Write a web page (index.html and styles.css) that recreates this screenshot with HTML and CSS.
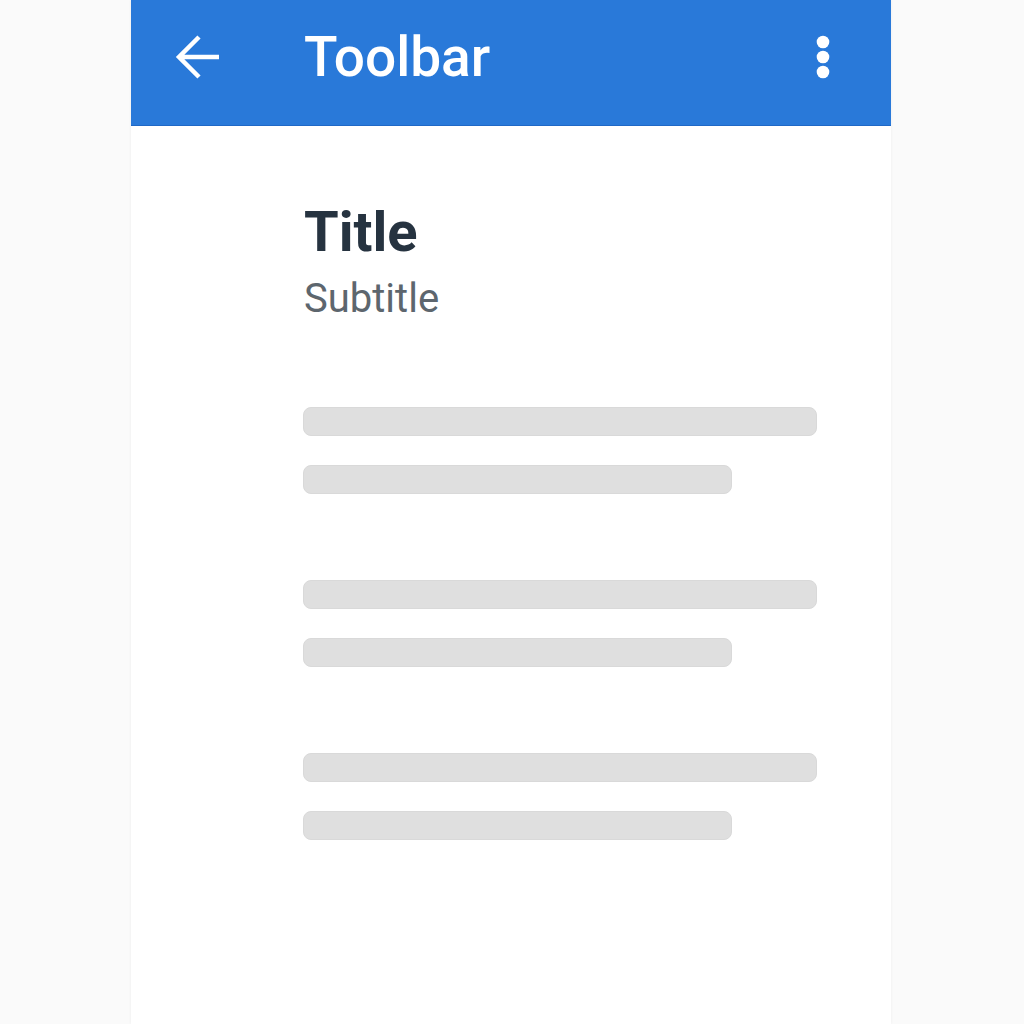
FILE: index.html
```html
<!DOCTYPE html>
<html>
<head>
<meta charset="utf-8">
<link rel="stylesheet" href="styles.css">
</head>
<body>
<div class="phone">
  <header class="toolbar">
    <svg class="back" width="48" height="64" viewBox="0 0 48 64" aria-hidden="true">
      <path d="M45 32 H7 M25 12 L5 32 L25 52" fill="none" stroke="#fff" stroke-width="4.5" stroke-linejoin="miter"/>
    </svg>
    <h1 class="toolbar-title">Toolbar</h1>
    <svg class="more" width="24" height="64" viewBox="0 0 24 64" aria-hidden="true">
      <circle cx="12" cy="17" r="6.3" fill="#fff"/>
      <circle cx="12" cy="32" r="6.3" fill="#fff"/>
      <circle cx="12" cy="47" r="6.3" fill="#fff"/>
    </svg>
  </header>
  <main class="content">
    <h2 class="title">Title</h2>
    <p class="subtitle">Subtitle</p>
    <div class="groups">
      <div class="group">
        <div class="bar bar-long"></div>
        <div class="bar bar-short"></div>
      </div>
      <div class="group">
        <div class="bar bar-long"></div>
        <div class="bar bar-short"></div>
      </div>
      <div class="group">
        <div class="bar bar-long"></div>
        <div class="bar bar-short"></div>
      </div>
    </div>
  </main>
</div>
</body>
</html>
```

FILE: styles.css
```css
html, body {
  margin: 0;
  padding: 0;
  background: #fafafa;
  font-family: Roboto, "Noto Sans", sans-serif;
}

.phone {
  width: 760px;
  height: 1024px;
  margin-left: 131px;
  background: #ffffff;
  box-shadow: 0 0 3px rgba(0, 0, 0, 0.06);
}

.toolbar {
  box-sizing: border-box;
  height: 126px;
  background: #2979d9;
  border-bottom: 1px solid #1f68c6;
  display: flex;
  align-items: flex-start;
  padding: 25px 0 0 43px;
}

.back {
  display: block;
  flex: none;
}

.toolbar-title {
  margin: 0 0 0 82px;
  font-size: 55px;
  line-height: 64px;
  font-weight: 500;
  color: #ffffff;
  flex: 1;
}

.more {
  display: block;
  flex: none;
  margin-right: 56px;
}

.content {
  padding: 74px 0 0 173px;
}

.title {
  margin: 0;
  font-size: 56px;
  line-height: 64px;
  font-weight: 700;
  color: #263340;
}

.subtitle {
  margin: 11px 0 0;
  font-size: 40px;
  line-height: 48px;
  font-weight: 400;
  color: #5d666e;
}

.groups {
  margin: 84px 0 0 -1px;
  display: flex;
  flex-direction: column;
  gap: 86px;
}

.group {
  display: flex;
  flex-direction: column;
  gap: 29px;
}

.bar {
  box-sizing: border-box;
  height: 29px;
  background: #dfdfdf;
  border: 1px solid #d9d9d9;
  border-radius: 8px;
}

.bar-long {
  width: 514px;
}

.bar-short {
  width: 429px;
}
```
